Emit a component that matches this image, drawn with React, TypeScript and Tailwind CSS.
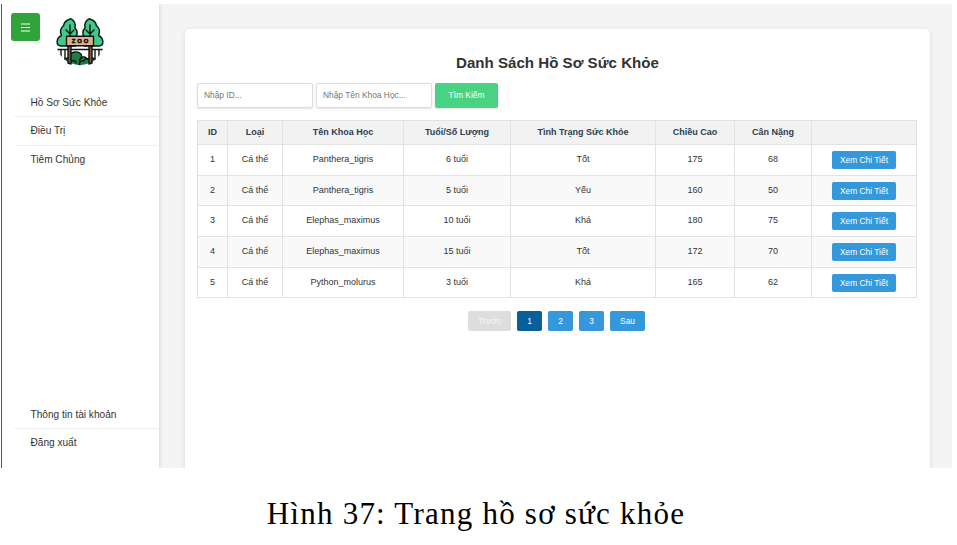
import React from "react";

const rows = [
  ["1", "Cá thể", "Panthera_tigris", "6 tuổi", "Tốt", "175", "68"],
  ["2", "Cá thể", "Panthera_tigris", "5 tuổi", "Yếu", "160", "50"],
  ["3", "Cá thể", "Elephas_maximus", "10 tuổi", "Khá", "180", "75"],
  ["4", "Cá thể", "Elephas_maximus", "15 tuổi", "Tốt", "172", "70"],
  ["5", "Cá thể", "Python_molurus", "3 tuổi", "Khá", "165", "62"],
];

const headers = ["ID", "Loại", "Tên Khoa Học", "Tuổi/Số Lượng", "Tình Trạng Sức Khỏe", "Chiều Cao", "Cân Nặng", ""];

const columns = "grid grid-cols-[30px_55px_121px_107px_145px_79px_77px_105px]";

function ZooLogo() {
  return (
    <svg viewBox="0 0 48 48" className="h-12 w-12">
      <defs>
        <clipPath id="disc">
          <circle cx="24" cy="23.200" r="24" />
        </clipPath>
      </defs>
      <g stroke="#0b1512" strokeWidth="1.400" strokeLinejoin="round" strokeLinecap="round">
        <g clipPath="url(#disc)">
          <path d="M0 31.500h48M1.500 32v7M5 32v10M9 32v9M39 32v9M43 32v10M46.500 32v7" fill="none" />
          <path d="M8 50V43c0-2 2-3 5-3 0-6 8-8 12-4 1 2 1 3 0 4 2-2 5-1 6 1 4-2 9-1 9 3v6z" fill="#237c46" />
          <path d="M24 48c-2-4 2-6 4-5 1-3 4-3 6-1M25 40c-1 1-2 2-1 3M16 43c2-1 4 0 4 2" fill="none" />
        </g>
        <path d="M15 .8c-3 .8-7 3-7.500 7C4.500 10 4 14 5.500 17.500 0 20 -.5 27.500 5 28h14c3 0 3-6 1-9 2-4 1-7-1-9C20 6 18 2 15 .8z" fill="#3fc98a" />
        <path d="M33 .8c3 .8 7 3 7.500 7C43.500 10 44 14 42.500 17.500 48 20 48.500 27.500 43 28H29c-3 0-3-6-1-9-2-4-1-7 1-9C28 6 30 2 33 .8z" fill="#3fc98a" />
        <path d="M14 7v11M10 12l4 4 4-4M34 7v11M30 12l4 4 4-4" fill="none" />
        <path d="M12 28h3v18l-3-1zM33 28h3v17l-3 1z" fill="#8c5645" />
        <path d="M10.500 18.300h27v9.500h-27z" fill="#deb18c" />
      </g>
      <text x="25" y="25.200" textAnchor="middle" fontSize="5.800" fontWeight="bold" letterSpacing="2" fill="#101010" stroke="#101010" strokeWidth="0.5" fontFamily="Liberation Sans, sans-serif">ZOO</text>
    </svg>
  );
}

function NavItem({ label, divided }: { label: string; divided?: boolean }) {
  return (
    <a className={`ml-3 block h-[28.7px] rounded-[3px] border-b pl-[16.5px] text-[10.1px] leading-[28px] text-[#333] ${divided ? "border-[#ececec]" : "border-transparent"}`}>
      {label}
    </a>
  );
}

function PageButton({ label, tone, width }: { label: string; tone: string; width: string }) {
  return <button className={`h-5 rounded-[2px] text-[8.4px] leading-5 ${tone} ${width}`}>{label}</button>;
}

export default function App() {
  return (
    <div className="h-[545px] w-[957px] overflow-hidden bg-white pt-1 font-['Liberation_Sans',Arial,sans-serif]">
      <div className="ml-px flex h-[464px] w-[951px] overflow-hidden bg-[#f4f4f4]">
        <aside className="z-10 flex w-[158px] shrink-0 flex-col border-l border-[#555] bg-white shadow-[1px_0_4px_rgba(0,0,0,0.12)]">
          <div className="flex pl-[9px] pt-[9px]">
            <button className="flex h-7 w-[29px] items-center justify-center rounded-[3px] bg-[#31a33b]">
              <svg viewBox="0 0 9 9" className="h-[9px] w-[9px]" stroke="white" strokeWidth="1">
                <path d="M0 1h9M0 4.500h9M0 8h9" />
              </svg>
            </button>
            <div className="ml-4 mt-[5px]"><ZooLogo /></div>
          </div>
          <nav className="mt-[22.5px]">
            <NavItem label="Hồ Sơ Sức Khỏe" divided />
            <NavItem label="Điều Trị" divided />
            <NavItem label="Tiêm Chủng" />
          </nav>
          <nav className="mb-[10px] mt-auto">
            <NavItem label="Thông tin tài khoản" divided />
            <NavItem label="Đăng xuất" />
          </nav>
        </aside>
        <main className="ml-[26px] mt-[25px] h-[460px] w-[745px] rounded-[5px] bg-white px-3 shadow-[0_1px_5px_rgba(0,0,0,0.1)]">
          <h1 className="mt-6 text-center text-[15.1px] font-bold leading-5 text-[#333]">Danh Sách Hồ Sơ Sức Khỏe</h1>
          <div className="mt-[10px] flex h-[25px] gap-[3px]">
            <input placeholder="Nhập ID..." className="w-[116px] rounded-[2px] border border-[#ddd] px-[6px] pb-[1px] text-[8.4px] shadow-[0_1px_2px_rgba(0,0,0,0.12)] placeholder:text-[#757575]" />
            <input placeholder="Nhập Tên Khoa Học..." className="w-[116px] rounded-[2px] border border-[#ddd] px-[6px] pb-[1px] text-[8.4px] shadow-[0_1px_2px_rgba(0,0,0,0.12)] placeholder:text-[#757575]" />
            <button className="w-[63px] rounded-[2px] bg-[#4ad283] pb-[1px] text-[8.4px] text-white shadow-[0_1px_2px_rgba(0,0,0,0.12)]">Tìm Kiếm</button>
          </div>
          <div className="mt-3 w-[720px] border-l border-t border-[#e2e2e2] text-[9px] text-[#333]">
            <div className={`${columns} h-6 bg-[#f2f2f2] font-bold text-[#2c3e50]`}>
              {headers.map((header, i) => (
                <div key={i} className="flex items-center justify-center border-b border-r border-[#e2e2e2]">{header}</div>
              ))}
            </div>
            {rows.map((row, r) => (
              <div key={row[0]} className={`${columns} h-[30.7px] ${r % 2 ? "bg-[#f9f9f9]" : "bg-white"}`}>
                {row.map((cell, c) => (
                  <div key={c} className="flex items-center justify-center border-b border-r border-[#e2e2e2]">{cell}</div>
                ))}
                <div className="flex items-center justify-center border-b border-r border-[#e2e2e2]">
                  <button className="h-[18px] w-16 rounded-[2px] bg-[#3498db] text-[8.4px] leading-[18px] text-white">Xem Chi Tiết</button>
                </div>
              </div>
            ))}
          </div>
          <div className="mt-[12.5px] flex justify-center gap-[6px] pr-[2px]">
            <PageButton label="Trước" tone="bg-[#ddd] text-[#f7f7f7]" width="w-[43px]" />
            <PageButton label="1" tone="bg-[#085f99] text-white" width="w-[25px]" />
            <PageButton label="2" tone="bg-[#3498db] text-white" width="w-[25px]" />
            <PageButton label="3" tone="bg-[#3498db] text-white" width="w-[25px]" />
            <PageButton label="Sau" tone="bg-[#3498db] text-white" width="w-[35px]" />
          </div>
        </main>
      </div>
      <p className="mt-[26px] whitespace-nowrap pr-[5px] text-center font-['Liberation_Serif','Times_New_Roman',serif] text-[31px] leading-10 tracking-[1.23px] text-black">Hình 37: Trang hồ sơ sức khỏe</p>
    </div>
  );
}
